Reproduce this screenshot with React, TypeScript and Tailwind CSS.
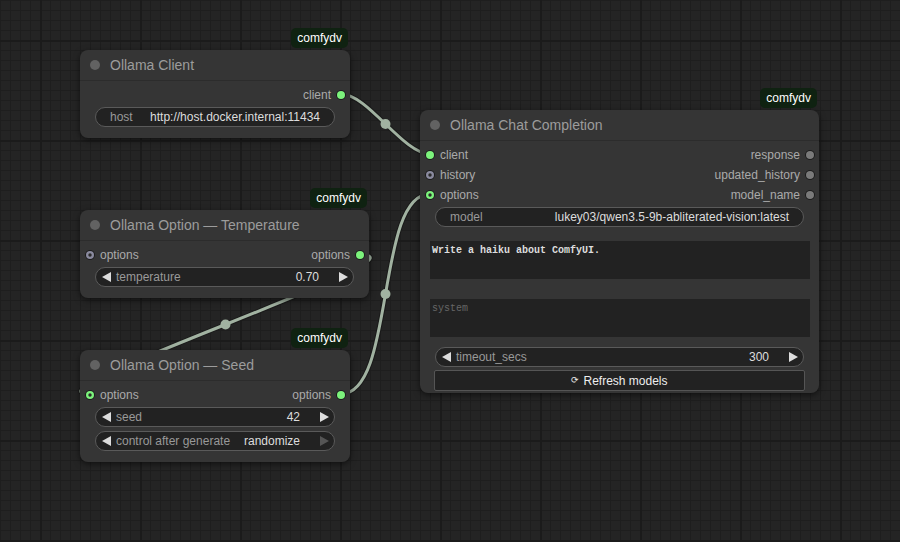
import React from 'react';

type DotKind = 'green' | 'greenRing' | 'greyRing' | 'grey';

// slot connector dot
const Dot = ({ kind }: { kind: DotKind }) => {
  const fill = kind === 'green' || kind === 'greenRing' ? '#7cf27c' : kind === 'greyRing' ? '#8a8a9e' : '#7a7a7a';
  const ring = kind === 'greenRing' || kind === 'greyRing';
  return (
    <svg width="10" height="10" viewBox="0 0 10 10" className="shrink-0">
      <circle cx="5" cy="5" r="4.8" fill="#151515" />
      <circle cx="5" cy="5" r="4" fill={fill} />
      {ring && <circle cx="5" cy="5" r="1.7" fill="#2a2a2a" />}
    </svg>
  );
};

const SlotRow = ({ input, inKind, output, outKind }: { input?: string; inKind?: DotKind; output?: string; outKind?: DotKind }) => (
  <div className="flex h-5 items-center justify-between text-[12px] text-[#aaaaaa]">
    <div className="flex items-center gap-[5px] pl-[5px]">
      {input && <Dot kind={inKind || 'green'} />}
      {input && <span>{input}</span>}
    </div>
    <div className="flex items-center gap-[5px] pr-[4px]">
      {output && <span>{output}</span>}
      {output && <Dot kind={outKind || 'green'} />}
    </div>
  </div>
);

const Arrow = ({ dir, dim }: { dir: 'l' | 'r'; dim?: boolean }) => (
  <svg width="10" height="10" viewBox="0 0 10 10" className="shrink-0">
    <polygon points={dir === 'l' ? '9,0 9,10 0,5' : '1,0 1,10 10,5'} fill={dim ? '#555555' : '#dddddd'} />
  </svg>
);

const TextWidget = ({ label, value }: { label: string; value: string }) => (
  <div className="mx-[15px] flex h-5 items-center justify-between rounded-full border border-[#5a5a5a] bg-[#222222] px-[14px] text-[12px]">
    <span className="text-[#999999]">{label}</span>
    <span className="text-[#dddddd]">{value}</span>
  </div>
);

const NumberWidget = ({ label, value, dimRight }: { label: string; value: string; dimRight?: boolean }) => (
  <div className="mx-[15px] flex h-5 items-center rounded-full border border-[#5a5a5a] bg-[#222222] pl-[6px] pr-[5px] text-[12px]">
    <Arrow dir="l" />
    <span className="ml-[4px] text-[#999999]">{label}</span>
    <span className="ml-auto mr-[19px] text-[#dddddd]">{value}</span>
    <Arrow dir="r" dim={dimRight} />
  </div>
);

const Node = ({ className, title, children }: { className: string; title: string; children?: React.ReactNode }) => (
  <div className={`absolute rounded-lg bg-[#353535] shadow-[0_2px_6px_rgba(0,0,0,0.55)] ${className}`}>
    <div className="absolute -top-[22px] right-[2px] flex h-5 items-center rounded-[5px] bg-[#0f2211] px-[6px] text-[12px] text-white">
      comfydv
    </div>
    <div className="flex h-[31px] items-center gap-[10px] border-b border-[#2c2c2c] pl-[10px]">
      <span className="h-[10px] w-[10px] rounded-full bg-[#626262]" />
      <span className="text-[14px] text-[#9c9c9c]">{title}</span>
    </div>
    <div className="flex flex-col pt-[4px]">{children}</div>
  </div>
);

// cubic bezier like litegraph: control offset = distance * 0.25
const link = (ax: number, ay: number, bx: number, by: number) => {
  const d = Math.hypot(bx - ax, by - ay) * 0.25;
  const c1x = ax + d, c2x = bx - d;
  const mx = (ax + 3 * c1x + 3 * c2x + bx) / 8;
  const my = (ay + 3 * ay + 3 * by + by) / 8;
  return { d: `M${ax},${ay} C${c1x},${ay} ${c2x},${by} ${bx},${by}`, mx, my };
};

const LINKS = [link(341, 94, 430, 154), link(361, 255, 90, 394), link(341, 394, 430, 194)];

export default function App() {
  return (
    <div className="relative h-[542px] w-[900px] overflow-hidden bg-[#242424] font-['Liberation_Sans',Arial,sans-serif]">
      <svg className="absolute inset-0" width="900" height="542">
        <defs>
          <pattern id="minor" width="10" height="10" patternUnits="userSpaceOnUse">
            <rect width="10" height="1" fill="#1e1e1e" />
            <rect width="1" height="10" fill="#1e1e1e" />
          </pattern>
          <pattern id="major" x="40" y="40" width="100" height="100" patternUnits="userSpaceOnUse">
            <rect width="100" height="2" fill="#1b1b1b" />
            <rect width="2" height="100" fill="#1b1b1b" />
          </pattern>
        </defs>
        <rect width="900" height="542" fill="url(#minor)" />
        <rect width="900" height="542" fill="url(#major)" />
        {LINKS.map((l, i) => (
          <g key={i}>
            <path d={l.d} fill="none" stroke="#1a1a1a" strokeWidth="5" />
            <path d={l.d} fill="none" stroke="#a1b2a1" strokeWidth="3" />
            <circle cx={l.mx} cy={l.my} r="5" fill="#a1b2a1" />
          </g>
        ))}
      </svg>

      <Node className="left-[80px] top-[50px] w-[270px] pb-[11px]" title="Ollama Client">
        <SlotRow output="client" />
        <div className="mt-[2px]">
          <TextWidget label="host" value="http://host.docker.internal:11434" />
        </div>
      </Node>

      <Node className="left-[80px] top-[210px] w-[289px] pb-[11px]" title="Ollama Option — Temperature">
        <SlotRow input="options" inKind="greyRing" output="options" />
        <div className="mt-[2px]">
          <NumberWidget label="temperature" value="0.70" />
        </div>
      </Node>

      <Node className="left-[80px] top-[350px] w-[270px] pb-[11px]" title="Ollama Option — Seed">
        <SlotRow input="options" inKind="greenRing" output="options" />
        <div className="mt-[2px] flex flex-col gap-[4px]">
          <NumberWidget label="seed" value="42" />
          <NumberWidget label="control after generate" value="randomize" dimRight />
        </div>
      </Node>

      <Node className="left-[420px] top-[110px] w-[399px] pb-[2px]" title="Ollama Chat Completion">
        <SlotRow input="client" inKind="green" output="response" outKind="grey" />
        <SlotRow input="history" inKind="greyRing" output="updated_history" outKind="grey" />
        <SlotRow input="options" inKind="greenRing" output="model_name" outKind="grey" />
        <div className="mt-[2px]">
          <TextWidget label="model" value="lukey03/qwen3.5-9b-abliterated-vision:latest" />
        </div>
        <div className="ml-[10px] mr-[9px] mt-[14px] h-[38px] bg-[#222222] px-[2px] pt-[4px] font-['Liberation_Mono',monospace] text-[10px] font-bold leading-3 text-[#dddddd]">
          Write a haiku about ComfyUI.
        </div>
        <div className="ml-[10px] mr-[9px] mt-[20px] h-[38px] bg-[#222222] px-[2px] pt-[4px] font-['Liberation_Mono',monospace] text-[10px] leading-3 text-[#666666]">
          system
        </div>
        <div className="mt-[10px]">
          <NumberWidget label="timeout_secs" value="300" />
        </div>
        <div className="mx-[14px] mt-[3px] flex h-[21px] items-center justify-center gap-[4px] rounded-[2px] border border-[#555555] bg-[#222222] text-[12px] text-[#eeeeee]">
          <span className="text-[9px]">⟳</span>
          <span>Refresh models</span>
        </div>
      </Node>
    </div>
  );
}
